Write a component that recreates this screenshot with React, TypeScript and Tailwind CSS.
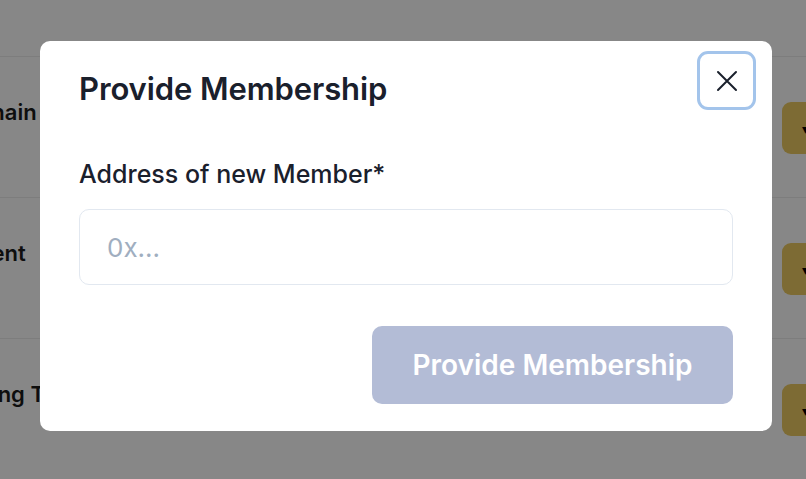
import React from "react";

const rows = [
  { title: "Blockchain", ml: "-ml-[80px]" },
  { title: "Agreement", ml: "-ml-[92px]" },
  { title: "Voting Token", ml: "-ml-[44px]" },
];

export default function App() {
  return (
    <div
      className="relative w-[806px] h-[479px] overflow-hidden bg-white"
      style={{ fontFamily: "Inter, 'Noto Sans', sans-serif" }}
    >
      {/* underlying page */}
      <div className="flex flex-col">
        <div className="h-[57px] border-b border-[#ededed]" />
        {rows.map((r) => (
          <div
            key={r.title}
            className="h-[141px] border-b border-[#ededed] flex items-center justify-between"
          >
            <div className={`flex flex-col pb-[30px] ${r.ml}`}>
              <span className="text-[22px] font-semibold text-[#1c1c1c] whitespace-nowrap">
                {r.title}
              </span>
            </div>
            <div className="w-[52px] h-[52px] -mr-[28px] rounded-[9px] bg-[#ecca62] flex items-center pl-[20px] mt-[2px]">
              <span className="text-black text-[14px]">▾</span>
            </div>
          </div>
        ))}
      </div>

      {/* overlay */}
      <div className="absolute inset-0 bg-black/[0.47]">
        <div className="ml-[40px] mt-[41px] w-[732px] h-[390px] bg-white rounded-[10px] flex flex-col px-[39px] relative">
          <h2 className="mt-[32px] text-[31px] leading-none font-semibold text-[#1a202c] tracking-[-0.1px]">
            Provide Membership
          </h2>
          <label className="mt-[58px] text-[25px] leading-none font-medium text-[#1a202c]">
            Address of new Member*
          </label>
          <div className="mt-[22px] h-[76px] border border-[#e2e8f0] rounded-[10px] flex items-center px-[27px]">
            <span className="text-[26px] text-[#a0aec0]">0x...</span>
          </div>
          <div className="mt-[41px] flex justify-end">
            <button className="w-[361px] h-[78px] rounded-[10px] bg-[#b3bcd6] text-white text-[28px] font-semibold">
              Provide Membership
            </button>
          </div>
          <button className="absolute right-[16px] top-[10px] w-[59px] h-[59px] rounded-[11px] border-[3.5px] border-[#a3c4eb] flex items-center justify-center">
            <svg width="24" height="24" viewBox="0 0 24 24" fill="none" stroke="#1a202c" strokeWidth="2" strokeLinecap="round">
              <path d="M3 3L21 21M21 3L3 21" />
            </svg>
          </button>
        </div>
      </div>
    </div>
  );
}
